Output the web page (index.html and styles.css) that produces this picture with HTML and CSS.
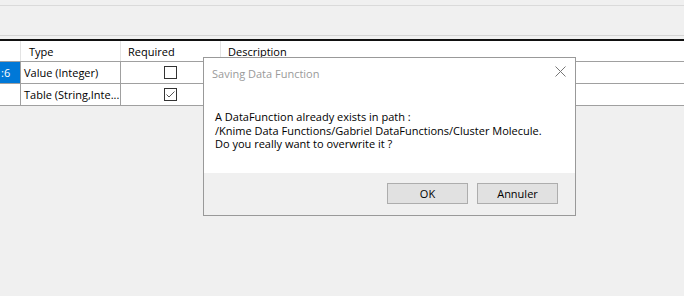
FILE: index.html
```html
<!DOCTYPE html>
<html>
<head>
<meta charset="utf-8">
<link rel="stylesheet" href="styles.css">
</head>
<body>
<div class="app">
  <div class="toolbar">
    <div class="strip"></div>
  </div>
  <div class="grid">
    <div class="row head">
      <div class="cell c0"></div>
      <div class="cell c1">Type</div>
      <div class="cell c2">Required</div>
      <div class="cell c3">Description</div>
    </div>
    <div class="row">
      <div class="cell c0 sel">:6</div>
      <div class="cell c1">Value (Integer)</div>
      <div class="cell c2"><span class="chk"></span></div>
      <div class="cell c3"></div>
    </div>
    <div class="row">
      <div class="cell c0"></div>
      <div class="cell c1">Table (String,Inte...</div>
      <div class="cell c2"><span class="chk"><svg width="11" height="11" viewBox="0 0 11 11"><polyline points="1.5,5.5 4,8 9.5,2.5" fill="none" stroke="#555" stroke-width="1"/></svg></span></div>
      <div class="cell c3"></div>
    </div>
  </div>

  <div class="dialog">
    <div class="titlebar">
      <span class="title">Saving Data Function</span>
      <svg class="close" width="11" height="11" viewBox="0 0 11 11"><path d="M0.5 0.5 L10.5 10.5 M10.5 0.5 L0.5 10.5" stroke="#777" stroke-width="1" fill="none"/></svg>
    </div>
    <div class="message">
      <p>A DataFunction already exists in path :</p>
      <p>/Knime Data Functions/Gabriel DataFunctions/Cluster Molecule.</p>
      <p>Do you really want to overwrite it ?</p>
    </div>
    <div class="footer">
      <button class="btn">OK</button>
      <button class="btn">Annuler</button>
    </div>
  </div>
</div>
</body>
</html>
```

FILE: styles.css
```css
* { box-sizing: border-box; }
html, body {
  margin: 0;
  padding: 0;
  background: #f0f0f0;
}
body {
  font-family: "Open Sans", "Noto Sans", sans-serif;
  font-size: 11px;
  color: #000;
}
.app {
  position: relative;
  width: 684px;
  height: 296px;
  overflow: hidden;
}
.toolbar {
  padding-top: 5px;
  height: 39px;
}
.strip {
  height: 31px;
  border-top: 1px solid #dadada;
  border-bottom: 1px solid #d4d4d4;
}
.grid {
  border-top: 2px solid #111;
  background: #fff;
}
.row {
  display: flex;
  height: 22px;
  border-bottom: 1px solid #a0a0a0;
}
.row.head {
  height: 21px;
}
.cell {
  display: flex;
  align-items: center;
  border-right: 1px solid #a0a0a0;
  white-space: nowrap;
  overflow: hidden;
  padding-left: 3px;
}
.head .cell {
  border-right-color: #e3e3e3;
}
.c0 { width: 21px; padding-left: 0; }
.c1 { width: 100px; }
.c2 { width: 100px; justify-content: center; padding-left: 0; }
.c3 { flex: 1; border-right: none; }
.head .c1 { padding-left: 8px; }
.head .c2 { justify-content: flex-start; padding-left: 7px; }
.head .c3 { padding-left: 7px; }
.sel {
  background: #0078d7;
  color: #fff;
  padding-left: 1px;
}
.chk {
  display: inline-flex;
  width: 13px;
  height: 13px;
  border: 1px solid #333;
  background: #fff;
}

.dialog {
  position: absolute;
  left: 203px;
  top: 57px;
  width: 373px;
  height: 159px;
  border: 1px solid #999;
  background: #fff;
  display: flex;
  flex-direction: column;
}
.titlebar {
  height: 30px;
  display: flex;
  align-items: center;
  justify-content: space-between;
  padding: 0 9px 0 8px;
}
.title {
  color: #9a9a9a;
  font-size: 11px;
}
.close {
  margin-bottom: 3px;
}
.message {
  height: 85px;
  padding: 22px 0 0 11px;
}
.message p {
  margin: 0;
  line-height: 13.5px;
}
.footer {
  height: 42px;
  background: #f0f0f0;
  display: flex;
  justify-content: flex-end;
  align-items: flex-start;
  gap: 9px;
  padding: 10px 17px 0 0;
}
.btn {
  width: 81px;
  height: 21px;
  border: 1px solid #adadad;
  background: #e1e1e1;
  font-family: inherit;
  font-size: 11px;
  color: #000;
  padding: 0;
  margin: 0;
}
```
